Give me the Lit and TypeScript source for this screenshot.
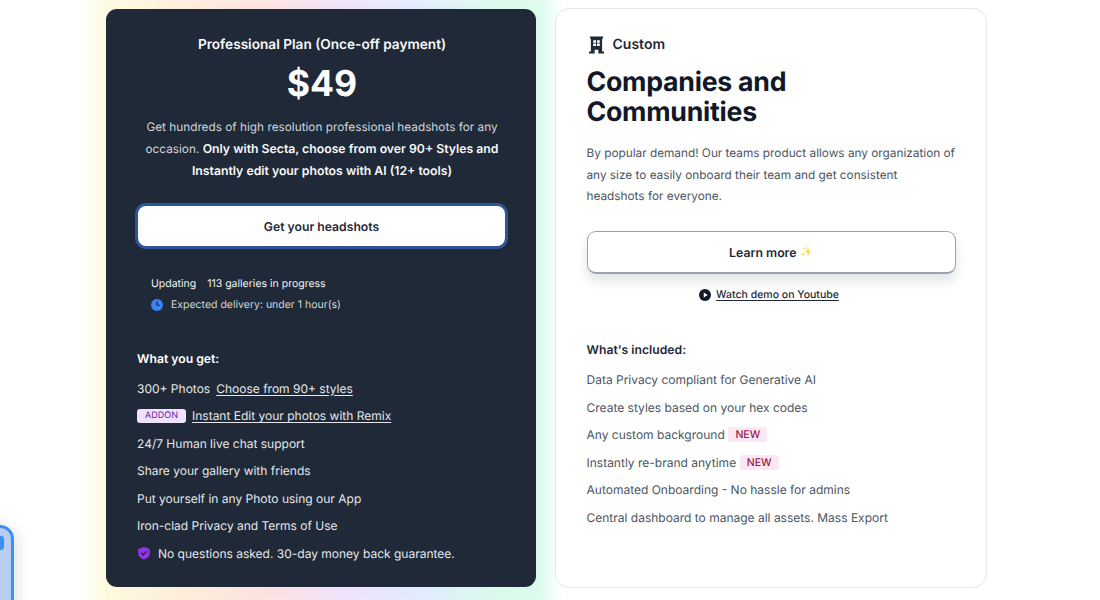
import { LitElement, html, css } from "lit";
import { customElement } from "lit/decorators.js";

@customElement("app-root")
export class AppRoot extends LitElement {
  static styles = css`
    :host {
      display: block;
      width: 1100px;
      height: 600px;
      overflow: hidden;
      position: relative;
      background: #fff;
      font-family: Inter, "Liberation Sans", sans-serif;
      -webkit-font-smoothing: antialiased;
      text-rendering: geometricPrecision;
    }
    * { box-sizing: border-box; }
    .page {
      display: grid;
      grid-template-columns: 430px 432px;
      column-gap: 19px;
      padding: 9px 0 0 106px;
      align-items: start;
    }
    .left-wrap { position: relative; height: 578px; }
    .glow {
      position: absolute;
      inset: -14px -15px -22px -13px;
      background: linear-gradient(90deg, #fefcdf 0%, #feeed8 18%, #fde0de 38%, #efe0fc 55%, #dfecfe 72%, #d8fbe9 90%, #dcfcec 100%);
      filter: blur(8px);
    }
    .dark {
      position: relative;
      height: 100%;
      background: #1f2937;
      border-radius: 11px;
      padding: 27px 29px 0 31px;
      color: #fff;
    }
    .plan { margin: 0; font-size: 13.65px; line-height: 18px; font-weight: 600; text-align: center; color: #f9fafb; }
    .price { margin: 8px 0 0; font-size: 35.6px; line-height: 44px; font-weight: 700; text-align: center; }
    .lead {
      margin: 11px 0 0;
      font-size: 11.8px;
      line-height: 21.2px;
      text-align: center;
      color: #d1d5db;
      white-space: nowrap;
    }
    .lead b { font-size: 12.25px; font-weight: 600; color: #f9fafb; }
    .cta {
      display: flex;
      align-items: center;
      justify-content: center;
      width: 373px;
      height: 46px;
      margin: 20.5px 0 0 -2px;
      border: 3px solid #2f5596;
      border-radius: 11px;
      background: #fff;
      color: #1f2937;
      font-size: 12.2px;
      font-weight: 600;
    }
    .status { margin: 28px 0 0 14px; font-size: 10.5px; line-height: 14px; color: #f3f4f6; display: flex; gap: 11px; }
    .eta { display: flex; align-items: center; gap: 8px; margin: 7px 0 0 14px; font-size: 10.5px; line-height: 14px; color: #d1d5db; }
    .eta svg { width: 12px; height: 12px; flex: none; }
    h3 { margin: 0; font-size: 12.2px; line-height: 16px; font-weight: 600; }
    .dark h3 { margin-top: 39px; color: #fff; }
    ul { list-style: none; margin: 0; padding: 0; font-size: 12px; }
    li { display: flex; align-items: center; height: 27.5px; white-space: nowrap; }
    .dark ul { margin-top: 7.5px; color: #e5e7eb; }
    .dark a { color: #e5e7eb; text-decoration: underline; text-underline-offset: 1.5px; }
    .link-a { margin-left: 6px; }
    .addon {
      display: inline-flex;
      align-items: center;
      justify-content: center;
      width: 49px;
      height: 14px;
      margin-right: 6px;
      border-radius: 3px;
      background: #f0e2fd;
      color: #6b21a8;
      font-size: 9px;
      line-height: 14px;
    }
    .shield { width: 14px; height: 14px; margin-right: 7px; flex: none; }

    .light {
      height: 580px;
      margin-top: -1px;
      background: #fff;
      border: 1px solid #e5e7eb;
      border-radius: 14px;
      padding: 26px 30px 0 30.5px;
      color: #111827;
      position: relative;
    }
    .kind { display: flex; align-items: center; gap: 9px; margin-left: 2px; font-size: 14px; line-height: 20px; font-weight: 600; color: #1f2937; }
    .kind svg { width: 15px; height: 18px; flex: none; }
    h2 { margin: 12px 0 0; font-size: 26.7px; line-height: 30.2px; font-weight: 700; letter-spacing: -0.25px; color: #111827; }
    .desc { margin: 16px 0 0; font-size: 11.8px; line-height: 21.2px; color: #4b5563; }
    .more {
      display: flex;
      align-items: center;
      justify-content: center;
      gap: 4px;
      width: 369px;
      height: 43px;
      margin-top: 24px;
      border: 1.5px solid #9ca3af;
      border-bottom-width: 2px;
      border-radius: 9px;
      background: #fff;
      font-size: 12.3px;
      font-weight: 600;
      color: #1f2937;
      box-shadow: 0 7px 12px rgba(17, 24, 39, 0.12);
    }
    .spark { font-size: 10px; color: #fdeeb0; line-height: 1; opacity: 0.75; }
    .demo { display: flex; align-items: center; justify-content: center; gap: 5px; width: 369px; padding-right: 4px; margin-top: 13px; font-size: 10.5px; line-height: 15px; font-weight: 500; color: #1f2937; }
    .demo a { color: inherit; text-decoration: underline; text-underline-offset: 1.5px; }
    .demo svg { width: 12px; height: 12px; flex: none; }
    .light h3 { margin-top: 40px; color: #1f2937; }
    .light ul { margin-top: 8px; color: #4b5563; }
    .new {
      display: inline-flex;
      align-items: center;
      justify-content: center;
      width: 39px;
      height: 15px;
      margin-left: 3.5px;
      border-radius: 2px;
      background: #fce7f3;
      color: #9d174d;
      font-size: 10.5px;
      font-weight: 500;
    }
    .widget {
      position: absolute;
      left: -50px;
      top: 525px;
      width: 64px;
      height: 120px;
      border: 3px solid #3b91f0;
      border-radius: 14px;
      background: #b9cdf0;
      box-shadow: 4px 2px 14px rgba(17, 24, 39, 0.12);
    }
    .widget i {
      position: absolute;
      right: 7px;
      top: 8px;
      width: 8px;
      height: 14px;
      border-radius: 0 3px 3px 0;
      background: #3b91f0;
    }
  `;

  render() {
    return html`
      <div class="page">
        <div class="left-wrap">
          <div class="glow"></div>
          <section class="dark">
            <p class="plan">Professional Plan (Once-off payment)</p>
            <p class="price">$49</p>
            <p class="lead">
              <span>Get hundreds of high resolution professional headshots for any</span><br />
              <span>occasion.</span> <b>Only with Secta, choose from over 90+ Styles and</b><br />
              <b>Instantly edit your photos with AI (12+ tools)</b>
            </p>
            <div class="cta">Get your headshots</div>
            <div class="status"><span>Updating</span><span>113 galleries in progress</span></div>
            <div class="eta">
              <svg viewBox="0 0 24 24"><circle cx="12" cy="12" r="12" fill="#3b82f6"/><path d="M12 5v7.5h6" fill="none" stroke="#1f2937" stroke-width="2.4"/></svg>
              <span>Expected delivery: under 1 hour(s)</span>
            </div>
            <h3>What you get:</h3>
            <ul>
              <li>300+ Photos <a class="link-a" href="#">Choose from 90+ styles</a></li>
              <li><span class="addon">ADDON</span><a href="#">Instant Edit your photos with Remix</a></li>
              <li>24/7 Human live chat support</li>
              <li>Share your gallery with friends</li>
              <li>Put yourself in any Photo using our App</li>
              <li>Iron-clad Privacy and Terms of Use</li>
              <li>
                <svg class="shield" viewBox="0 0 24 24"><path d="M12 1.500 22 5v7c0 5.500-4 9.500-10 11C6 21.500 2 17.500 2 12V5z" fill="#9333ea"/><path d="m7.500 12 3.200 3.200 5.800-6" fill="none" stroke="#1f2937" stroke-width="2.400"/></svg>
                No questions asked. 30-day money back guarantee.
              </li>
            </ul>
          </section>
        </div>
        <section class="light">
          <div class="kind">
            <svg viewBox="0 0 16 18"><path fill-rule="evenodd" d="M1 0h14v2h-1v14h2v2H10v-4H6v4H0v-2h2V2H1zM4.500 4v2.500h3V4zm4 0v2.500h3V4zm-4 3.500V10h3V7.500zm4 0V10h3V7.500z" fill="#1f2937"/></svg>
            <span>Custom</span>
          </div>
          <h2>Companies and<br />Communities</h2>
          <p class="desc">By popular demand! Our teams product allows any organization of any size to easily onboard their team and get consistent headshots for everyone.</p>
          <div class="more"><span>Learn more</span><span class="spark">✨</span></div>
          <div class="demo">
            <svg viewBox="0 0 24 24"><circle cx="12" cy="12" r="12" fill="#111827"/><path d="M9.500 7v10l8-5z" fill="#fff"/></svg>
            <a href="#">Watch demo on Youtube</a>
          </div>
          <h3>What's included:</h3>
          <ul>
            <li>Data Privacy compliant for Generative AI</li>
            <li>Create styles based on your hex codes</li>
            <li>Any custom background <span class="new">NEW</span></li>
            <li>Instantly re-brand anytime <span class="new">NEW</span></li>
            <li>Automated Onboarding - No hassle for admins</li>
            <li>Central dashboard to manage all assets. Mass Export</li>
          </ul>
        </section>
      </div>
      <div class="widget"><i></i></div>
    `;
  }
}
